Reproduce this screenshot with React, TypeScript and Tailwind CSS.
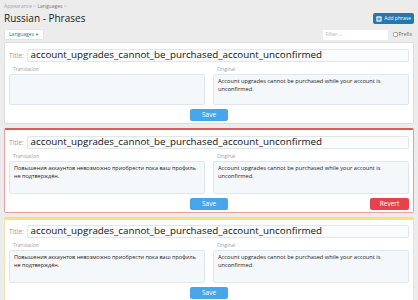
import React from "react";

type Phrase = {
  title: string;
  translation: string;
  original: string;
  state: "default" | "custom" | "outdated";
};

const phrases: Phrase[] = [
  {
    title: "account_upgrades_cannot_be_purchased_account_unconfirmed",
    translation: "",
    original: "Account upgrades cannot be purchased while your account is unconfirmed.",
    state: "default",
  },
  {
    title: "account_upgrades_cannot_be_purchased_account_unconfirmed",
    translation: "Повышения аккаунтов невозможно приобрести пока ваш профиль не подтверждён.",
    original: "Account upgrades cannot be purchased while your account is unconfirmed.",
    state: "custom",
  },
  {
    title: "account_upgrades_cannot_be_purchased_account_unconfirmed",
    translation: "Повышения аккаунтов невозможно приобрести пока ваш профиль не подтверждён.",
    original: "Account upgrades cannot be purchased while your account is unconfirmed.",
    state: "outdated",
  },
];

function PhraseCard({ phrase }: { phrase: Phrase }) {
  const frame =
    phrase.state === "custom"
      ? "border-[#e8a0a0] border-t-[2px] border-t-[#e05a5a] pt-[6px]"
      : phrase.state === "outdated"
        ? "border-[#f1e4b4] border-t-[3px] border-t-[#f6e27a] pt-[5px]"
        : "border-[#dcdcdc] pt-[6px]";
  const boxHeight = phrase.state === "default" ? "h-[31px]" : "h-[33px]";

  return (
    <div className={`rounded-[2px] border bg-white px-[4px] pb-[2px] ${frame}`}>
      {/* title row */}
      <div className="flex items-center gap-[3px]">
        <span className="text-[6.5px] text-[#9a9a9a]">Title:</span>
        <div className="flex h-[13px] flex-1 items-center rounded-[2px] border border-[#e1e6ec] bg-[#fafbfc] px-[3px] text-[9.8px] text-[#141414]">
          {phrase.title}
        </div>
      </div>

      <div className="mt-[4px] grid grid-cols-2 gap-[8px]">
        <div>
          <div className="pl-[4px] text-[5px] leading-[7px] text-[#a0a0a0]">Translation</div>
          <div className={`mt-[1px] rounded-[2px] border border-[#e1e6ec] bg-[#f5f8fb] px-[4px] py-[3px] text-[5.5px] leading-[7.5px] text-[#222] ${boxHeight}`}>
            <p className="max-w-[182px]">{phrase.translation}</p>
          </div>
        </div>
        <div>
          <div className="pl-[4px] text-[5px] leading-[7px] text-[#a0a0a0]">Original</div>
          <div className={`mt-[1px] rounded-[2px] border border-[#e1e6ec] bg-[#f5f8fb] px-[4px] py-[3px] text-[5.7px] leading-[7.5px] text-[#222] ${boxHeight}`}>
            {phrase.original}
          </div>
        </div>
      </div>

      <div className="mt-[4px] grid grid-cols-[1fr_auto_1fr] items-center">
        <span />
        <button className="h-[12px] w-[38px] rounded-[2px] bg-[#47a6ea] text-[6.5px] leading-[12px] text-white">
          Save
        </button>
        {phrase.state === "custom" ? (
          <button className="h-[12px] w-[39px] justify-self-end rounded-[2px] bg-[#e5434a] text-[6.5px] leading-[12px] text-white">
            Revert
          </button>
        ) : (
          <span />
        )}
      </div>
    </div>
  );
}

export default function App() {
  return (
    <div className="min-h-[300px] bg-[#ececec] px-[4px] pt-[3px] font-['Open_Sans',sans-serif]">
      <div className="text-[5px] leading-[7px] text-[#a5a5a5]">
        Appearance &gt; <span className="text-[#777]">Languages</span> &gt;
      </div>

      <div className="mt-[2px] flex items-center justify-between">
        <h1 className="text-[10px] leading-[13px] text-[#222]">Russian - Phrases</h1>
        <button className="flex h-[11px] items-center gap-[2px] rounded-[2px] bg-[#2577b1] px-[3px] text-[5px] text-white">
          <svg width="6" height="6" viewBox="0 0 10 10">
            <rect x="0.5" y="0.5" width="9" height="9" rx="1.5" fill="#dbe8f3" />
            <path d="M5 2.5v5M2.5 5h5" stroke="#2577b1" strokeWidth="1.6" />
          </svg>
          Add phrase
        </button>
      </div>

      <div className="mt-[4px] mb-[2px] flex items-center justify-between">
        <button className="flex h-[11px] items-center gap-[1px] rounded-[2px] border border-[#e3e3e3] bg-white px-[4px] text-[5px] text-[#2577b1]">
          Languages
          <span className="text-[4px]">▼</span>
        </button>
        <div className="flex items-center gap-[5px]">
          <div className="flex h-[10px] w-[65px] items-center bg-white px-[3px] text-[5px] text-[#b0b0b0]">
            Filter...
          </div>
          <div className="flex items-center gap-[1px] pr-[2px] text-[5px] text-[#666]">
            <span className="inline-block h-[5px] w-[5px] rounded-[1px] border border-[#aaa] bg-white" />
            Prefix
          </div>
        </div>
      </div>

      <div className="flex flex-col gap-[4px]">
        {phrases.map((phrase, i) => (
          <PhraseCard key={i} phrase={phrase} />
        ))}
      </div>
    </div>
  );
}
